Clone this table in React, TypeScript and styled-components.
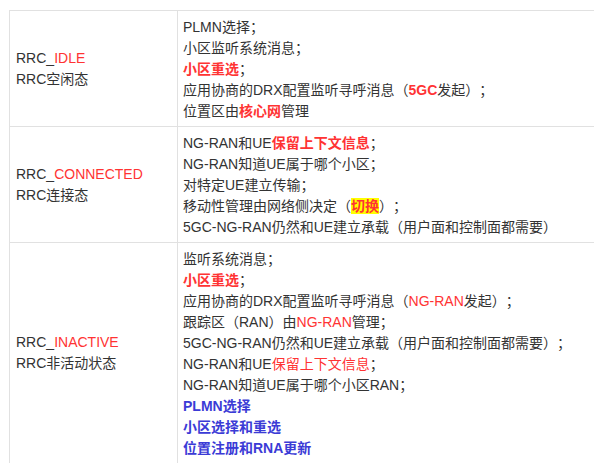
import { createGlobalStyle, styled } from "styled-components";

const GlobalStyle = createGlobalStyle`
  html, body {
    margin: 0;
    padding: 0;
    background: #fff;
  }
  body {
    font-family: "Liberation Sans", "Noto Sans CJK SC", sans-serif;
    font-size: 14px;
    color: #333;
    text-spacing-trim: space-all;
  }
`;

type Part = string | { t: string; k: "red" | "redBold" | "blue" | "mark" };

const rows: { state: string; name: string; lines: Part[][] }[] = [
  {
    state: "IDLE",
    name: "RRC空闲态",
    lines: [
      ["PLMN选择；"],
      ["小区监听系统消息；"],
      [{ t: "小区重选", k: "redBold" }, "；"],
      ["应用协商的DRX配置监听寻呼消息（", { t: "5GC", k: "redBold" }, "发起）；"],
      ["位置区由", { t: "核心网", k: "redBold" }, "管理"],
    ],
  },
  {
    state: "CONNECTED",
    name: "RRC连接态",
    lines: [
      ["NG-RAN和UE", { t: "保留上下文信息", k: "redBold" }, "；"],
      ["NG-RAN知道UE属于哪个小区；"],
      ["对特定UE建立传输；"],
      ["移动性管理由网络侧决定（", { t: "切换", k: "mark" }, "）；"],
      ["5GC-NG-RAN仍然和UE建立承载（用户面和控制面都需要）"],
    ],
  },
  {
    state: "INACTIVE",
    name: "RRC非活动状态",
    lines: [
      ["监听系统消息；"],
      [{ t: "小区重选", k: "redBold" }, "；"],
      ["应用协商的DRX配置监听寻呼消息（", { t: "NG-RAN", k: "red" }, "发起）；"],
      ["跟踪区（RAN）由", { t: "NG-RAN", k: "red" }, "管理；"],
      ["5GC-NG-RAN仍然和UE建立承载（用户面和控制面都需要）；"],
      ["NG-RAN和UE", { t: "保留上下文信息", k: "red" }, "；"],
      ["NG-RAN知道UE属于哪个小区RAN；"],
      [{ t: "PLMN选择", k: "blue" }],
      [{ t: "小区选择和重选", k: "blue" }],
      [{ t: "位置注册和RNA更新", k: "blue" }],
    ],
  },
];

export default function App() {
  return (
    <>
      <GlobalStyle />
      <Page>
        <Table>
          <tbody>
            {rows.map((row) => (
              <tr key={row.state}>
                <StateCell>
                  <TextLine>
                    RRC_<Red>{row.state}</Red>
                  </TextLine>
                  <TextLine>{row.name}</TextLine>
                </StateCell>
                <DescCell>
                  {row.lines.map((parts, i) => (
                    <TextLine key={i}>
                      {parts.map((p, j) => {
                        if (typeof p === "string") return <span key={j}>{p}</span>;
                        if (p.k === "red") return <Red key={j}>{p.t}</Red>;
                        if (p.k === "redBold") return <RedBold key={j}>{p.t}</RedBold>;
                        if (p.k === "blue") return <BlueBold key={j}>{p.t}</BlueBold>;
                        return <Marked key={j}>{p.t}</Marked>;
                      })}
                    </TextLine>
                  ))}
                </DescCell>
              </tr>
            ))}
          </tbody>
        </Table>
      </Page>
    </>
  );
}

const Page = styled.div`
  padding: 10px 0 0 9px;
  width: 596px;
  height: 463px;
  box-sizing: border-box;
  overflow: hidden;
`;

const Table = styled.table`
  border-collapse: collapse;
  width: 585px;
  table-layout: fixed;
`;

const StateCell = styled.td`
  width: 168px;
  box-sizing: border-box;
  border: 1px solid #e1e1e1;
  padding: 5px 6px;
  vertical-align: middle;
`;

const DescCell = styled.td`
  border-top: 1px solid #e1e1e1;
  border-bottom: 1px solid #e1e1e1;
  border-left: 1px solid #e1e1e1;
  padding: 6px 5px 4px;
  vertical-align: top;
  white-space: nowrap;
`;

const TextLine = styled.div`
  line-height: 21px;
  height: 21px;
`;

const Red = styled.span`
  color: #ff3333;
`;

const RedBold = styled.span`
  color: #ff3333;
  font-weight: bold;
`;

const BlueBold = styled.span`
  color: #3b3bd6;
  font-weight: bold;
`;

const Marked = styled.span`
  color: #ff3333;
  font-weight: bold;
  background: #ffff00;
`;
